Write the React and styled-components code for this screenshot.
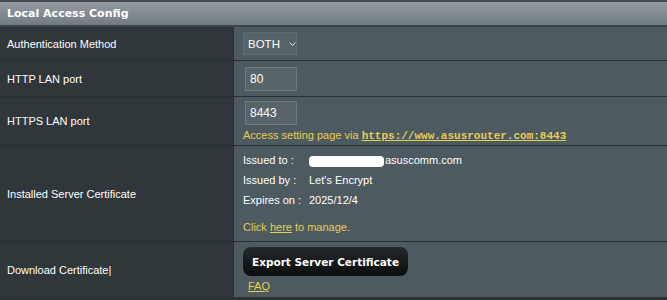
import React from 'react'
import styled, { createGlobalStyle } from 'styled-components'

const Global = createGlobalStyle`
  html, body {
    margin: 0;
    padding: 0;
    background: #2b3235;
  }
  body {
    font-family: 'Liberation Sans', Arial, sans-serif;
    font-size: 11px;
  }
`

const Panel = styled.div`
  width: 667px;
  height: 300px;
  background: #2b3235;
  border-top: 2px solid #434c50;
  box-sizing: border-box;
`

const Header = styled.div`
  height: 23px;
  display: flex;
  align-items: center;
  padding-left: 7px;
  background: linear-gradient(#939ca0, #717c82);
  border-bottom: 2px solid #3c464a;
  color: #ffffff;
  font-family: 'DejaVu Sans', Verdana, sans-serif;
  font-weight: bold;
  font-size: 11px;
`

const Row = styled.div`
  display: grid;
  grid-template-columns: 234px 1fr;
  height: ${p => p.h}px;
  border-bottom: 1px solid #2a3134;
`

const Label = styled.div`
  background: #30373a;
  color: #ffffff;
  display: flex;
  align-items: center;
  padding-left: 7px;
  border-right: 1px solid #283033;
`

const Cell = styled.div`
  background: #4d5a60;
  padding: ${p => p.pad || '0 0 0 9px'};
  display: flex;
  flex-direction: column;
  justify-content: center;
`

const Select = styled.div`
  width: 54px;
  height: 23px;
  box-sizing: border-box;
  background: #576369;
  border: 1px solid #5f6c72;
  color: #ffffff;
  font-size: 11.5px;
  display: flex;
  align-items: center;
  padding-left: 4px;
  gap: 9px;
`

const Input = styled.div`
  width: 52px;
  height: 24px;
  box-sizing: border-box;
  margin-left: 2px;
  background: #596469;
  border: 1px solid #6f7b80;
  color: #ffffff;
  font-size: 12px;
  display: flex;
  align-items: center;
  padding-left: 4px;
`

const Hint = styled.div`
  color: #e6cd55;
  margin-top: 4px;
`

const Mono = styled.a`
  font-family: 'Liberation Mono', 'Courier New', monospace;
  font-size: 11px;
  font-weight: bold;
  color: #e6cd55;
  text-decoration: underline;
`

const Info = styled.div`
  display: grid;
  grid-template-columns: 66px auto;
  row-gap: 7px;
  color: #ffffff;
  line-height: 13px;
`

const Masked = styled.span`
  display: inline-block;
  width: 75px;
  height: 11px;
  background: #ffffff;
  border-radius: 4px;
  vertical-align: middle;
  margin-right: 1px;
`

const Manage = styled.div`
  color: #e6cd55;
  margin-top: 14px;
  a {
    color: #e6cd55;
    text-decoration: underline;
  }
`

const Button = styled.div`
  width: 165px;
  height: 29px;
  box-sizing: border-box;
  background: linear-gradient(#25292b, #0b0d0e);
  border-radius: 8px;
  color: #ffffff;
  font-family: 'DejaVu Sans', Verdana, sans-serif;
  font-weight: bold;
  font-size: 10.5px;
  white-space: nowrap;
  display: flex;
  align-items: center;
  justify-content: center;
`

const Faq = styled.a`
  margin: 4px 0 0 5px;
  color: #e6cd55;
  font-size: 11px;
  text-decoration: underline;
`

const Caret = () => (
  <svg width="10" height="6" viewBox="0 0 10 6">
    <path d="M1 1l4 4 4-4" fill="none" stroke="#fff" strokeWidth="1.2" />
  </svg>
)

export default function App() {
  return (
    <>
      <Global />
      <Panel>
        <Header>Local Access Config</Header>
        <Row h={33}>
          <Label>Authentication Method</Label>
          <Cell>
            <Select>BOTH <Caret /></Select>
          </Cell>
        </Row>
        <Row h={35}>
          <Label>HTTP LAN port</Label>
          <Cell>
            <Input>80</Input>
          </Cell>
        </Row>
        <Row h={48}>
          <Label>HTTPS LAN port</Label>
          <Cell>
            <Input>8443</Input>
            <Hint>
              Access setting page via <Mono>https://www.asusrouter.com:8443</Mono>
            </Hint>
          </Cell>
        </Row>
        <Row h={95}>
          <Label>Installed Server Certificate</Label>
          <Cell>
            <Info>
              <span>Issued to :</span>
              <span><Masked />asuscomm.com</span>
              <span>Issued by :</span>
              <span>Let's Encrypt</span>
              <span>Expires on :</span>
              <span>2025/12/4</span>
            </Info>
            <Manage>
              Click <a>here</a> to manage.
            </Manage>
          </Cell>
        </Row>
        <Row h={55}>
          <Label>Download Certificate|</Label>
          <Cell pad="0 0 0 9px">
            <Button>Export Server Certificate</Button>
            <Faq>FAQ</Faq>
          </Cell>
        </Row>
      </Panel>
    </>
  )
}
